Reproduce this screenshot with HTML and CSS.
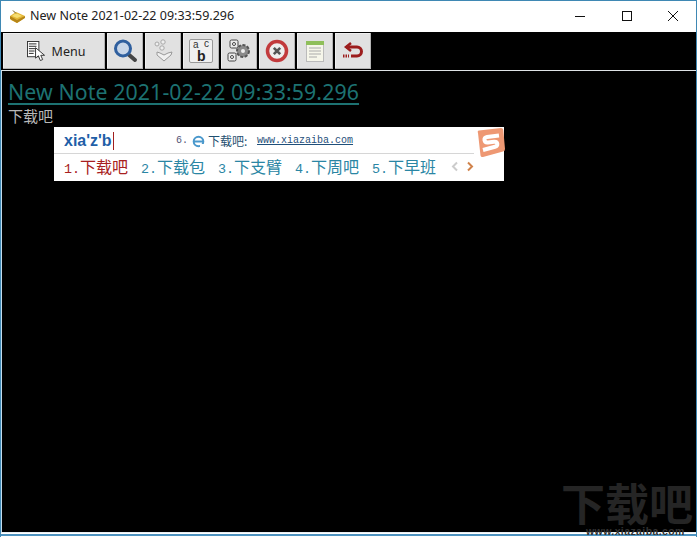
FILE: index.html
```html
<!DOCTYPE html>
<html lang="zh">
<head>
<meta charset="utf-8">
<title>New Note</title>
<link rel="stylesheet" href="styles.css">
</head>
<body>
<div class="window">
  <header class="titlebar">
    <svg class="app-icon" width="17" height="14" viewBox="0 0 17 14"><path d="M1 6 7 2l9 4-2 3-6 4-6-3z" fill="#e3b636"/><path d="M1 6l7 4 8-4v2l-8 5-7-4z" fill="#b58518"/><path d="M3 6 7 3l6 3-5 2z" fill="#f6dd70"/><path d="M4 0.500l3 3" stroke="#6a5010"/></svg>
    <span class="title">New Note 2021-02-22 09:33:59.296</span>
    <div class="caption">
      <svg width="46" height="31" viewBox="0 0 46 31"><path d="M17 15.500h10" stroke="#111"/></svg>
      <svg width="46" height="31" viewBox="0 0 46 31"><rect x="18.500" y="10.500" width="9" height="9" fill="none" stroke="#111"/></svg>
      <svg width="46" height="31" viewBox="0 0 46 31"><path d="M18 10l10 10M28 10 18 20" stroke="#111"/></svg>
    </div>
  </header>
  <nav class="toolbar">
    <button class="tool menu">
      <svg width="20" height="22" viewBox="0 0 20 22"><rect x="0.500" y="0.500" width="12" height="16" fill="#fff" stroke="#333"/><path d="M2 3h8M2 5.500h8M2 8h8M2 10.500h6M2 13h5" stroke="#222"/><path d="M9 7v11l3-2.500 2 5 2.500-1-2-4.500h4z" fill="#fff" stroke="#333"/></svg>
      <span>Menu</span>
    </button>
    <button class="tool">
      <svg width="26" height="26" viewBox="0 0 26 26"><path d="M16 16l7 6" stroke="#444" stroke-width="4" stroke-linecap="round"/><circle cx="11" cy="10.500" r="7.500" fill="#c8d6e8" stroke="#2f5f9e" stroke-width="3"/></svg>
    </button>
    <button class="tool">
      <svg width="24" height="26" viewBox="0 0 24 26"><g fill="#eee" stroke="#a8a8a8"><circle cx="6" cy="6" r="2"/><circle cx="12" cy="4" r="2.200"/><circle cx="11" cy="10" r="2.200"/></g><path d="M6 14l3 1 4 2 4-2 4-1-1 3-7 6-7-6z" fill="#f0f0f0" stroke="#999"/></svg>
    </button>
    <button class="tool">
      <span class="ab"><span class="ab-a">a</span><span class="ab-c">c</span><b class="ab-b">b</b></span>
    </button>
    <button class="tool">
      <svg width="28" height="26" viewBox="0 0 28 26"><g fill="#ececec" stroke="#444"><rect x="5" y="2" width="8" height="8" rx="1.500"/><rect x="3" y="15" width="8" height="8" rx="1.500"/></g><circle cx="9" cy="6" r="1.500" fill="#fff" stroke="#444"/><circle cx="7" cy="19" r="1.500" fill="#fff" stroke="#444"/><circle cx="18" cy="13" r="6" fill="#8a8a8a" stroke="#555" stroke-width="2" stroke-dasharray="3 1.500"/><circle cx="18" cy="13" r="2" fill="#eee"/></svg>
    </button>
    <button class="tool">
      <svg width="26" height="26" viewBox="0 0 26 26"><circle cx="13" cy="13" r="9.500" fill="#eee" stroke="#c23a3c" stroke-width="3.500"/><path d="M9.800 9.800l6.400 6.400M16.200 9.800l-6.400 6.400" stroke="#555" stroke-width="2.600"/></svg>
    </button>
    <button class="tool">
      <svg width="24" height="26" viewBox="0 0 24 26"><rect x="3.500" y="3.500" width="17" height="20" fill="#f6f6ea" stroke="#bbb"/><rect x="3" y="3" width="18" height="4" fill="#8fbf5a"/><path d="M6 10h12M6 13h12M6 16h12M6 19h8" stroke="#aaa"/></svg>
    </button>
    <button class="tool">
      <svg width="24" height="26" viewBox="0 0 24 26"><path d="M10 5 5 9l5 4" fill="none" stroke="#9c1c1c" stroke-width="2.500"/><path d="M5 9h11a4.500 4.500 0 0 1 0 9H10" fill="none" stroke="#9c1c1c" stroke-width="3"/><path d="M2 18h6" stroke="#9c1c1c" stroke-width="3" stroke-dasharray="1.500 1"/></svg>
    </button>
  </nav>
  <main class="editor">
    <h1 class="heading">New Note 2021-02-22 09:33:59.296</h1>
    <p class="body-text">下载吧</p>
  </main>
  <div class="frame-bottom"></div>
  <section class="ime">
    <div class="ime-top">
      <span class="pinyin">xia'z'b</span>
      <span class="hint"><span class="hint-n">6.</span>
        <svg class="e-icon" width="13" height="13" viewBox="0 0 13 13"><circle cx="6.500" cy="6.500" r="4.800" fill="none" stroke="#4a98cc" stroke-width="2"/><path d="M2 6.500h9" stroke="#4a98cc" stroke-width="2"/><path d="M8 9h4v3H8z" fill="#fff"/></svg>
        <span class="hint-t">下载吧:</span><span class="hint-url">www.xiazaiba.com</span></span>
      <svg class="sogou" width="32" height="32" viewBox="0 0 32 32"><path d="M4 6Q3 4 5 3.500L27 1q2 0 2.300 2L31 22q0 2-2 2.500L9 30q-2 .5-2.500-1.500z" fill="#ee9873"/><path d="M25 8.500 13 10q-3 .5-2.500 3.200t3.500 2.300l6-.8q3-.3 3.300 2t-2.300 3L9 23" fill="none" stroke="#fff" stroke-width="4"/></svg>
    </div>
    <div class="ime-list">
      <span class="cand active"><span class="num">1.</span>下载吧</span>
      <span class="cand"><span class="num">2.</span>下载包</span>
      <span class="cand"><span class="num">3.</span>下支臂</span>
      <span class="cand"><span class="num">4.</span>下周吧</span>
      <span class="cand"><span class="num">5.</span>下早班</span>
      <span class="arrows">
        <svg width="8" height="11" viewBox="0 0 8 11"><path d="M6 1.500 2 5.500l4 4" fill="none" stroke="#ccc" stroke-width="2"/></svg>
        <svg width="8" height="11" viewBox="0 0 8 11"><path d="M2 1.500l4 4-4 4" fill="none" stroke="#d0824a" stroke-width="2"/></svg>
      </span>
    </div>
  </section>
  <div class="watermark"><span class="wm-big">下载吧</span><span class="wm-url">www.xiazaiba.com</span></div>
</div>
</body>
</html>
```
FILE: styles.css
```css
* { box-sizing: border-box; }
html, body { margin: 0; padding: 0; }
body { width: 697px; height: 537px; overflow: hidden; background: #000; font-family: "Liberation Sans", "Noto Sans CJK SC", sans-serif; }
.window { position: relative; width: 697px; height: 537px; display: flex; flex-direction: column; border: 1px solid #3f88b4; border-bottom: 0; overflow: hidden; background: #000; }
.titlebar { height: 31px; flex: none; background: #fff; display: flex; align-items: center; padding-left: 8px; }
.app-icon { flex: none; }
.title { margin-left: 4px; font: 12.500px/1 "Noto Sans", "Liberation Sans", sans-serif; color: #222; white-space: nowrap; }
.caption { margin-left: auto; display: flex; height: 31px; }
.caption svg { display: block; }
.toolbar { height: 38px; flex: none; background: #000; display: flex; gap: 2px; padding: 1px 0 1px 2px; }
.tool { width: 36px; height: 36px; padding: 0; border: 0; background: #e1e1e1; box-shadow: inset -1px -1px 0 #b4b4b4, inset 1px 1px 0 #efefef; display: flex; align-items: center; justify-content: center; }
.menu { width: 102px; gap: 6px; padding-left: 4px; font: 12.500px "Noto Sans", "Liberation Sans", sans-serif; color: #222; }
.menu svg { width: 19px; height: 21px; }
.ab { position: relative; display: block; width: 24px; height: 24px; background: #f0f0f0; border: 1px solid #999; border-radius: 2px; font-family: "Liberation Sans", sans-serif; color: #333; }
.ab-a, .ab-c, .ab-b { position: absolute; line-height: 1; }
.ab-a { left: 3px; top: 0; font-size: 10px; }
.ab-c { right: 3px; top: -1px; font-size: 10px; }
.ab-b { left: 7px; top: 9px; font-size: 14px; color: #222; }
.editor { flex: 1; background: #000; border-top: 1px solid #dfe3e6; border-left: 1px solid #c4dcec; padding: 8px 0 0 6px; }
.heading { margin: 0; font: 400 21.300px/26px "Noto Sans", "Liberation Sans", sans-serif; letter-spacing: 0.100px; color: #1d7272; text-decoration: underline; text-underline-offset: 3px; white-space: nowrap; }
.body-text { margin: 1px 0 0; font: 15px/19px "Noto Sans CJK SC", sans-serif; color: #b8b8b8; }
.frame-bottom { flex: none; height: 5px; background: #fff; border-top: 1px solid #e8eef2; box-shadow: inset 0 1px 0 #fff, inset 0 3px 0 #4d93c0; }
.ime { position: absolute; left: 53px; top: 126px; width: 450px; height: 54px; background: #fff; display: flex; flex-direction: column; }
.ime-top { position: relative; height: 27px; flex: none; margin-right: 30px; padding-top: 2px; border-bottom: 1px solid #d6d6d6; display: flex; align-items: center; padding-left: 10px; }
.pinyin { width: 112px; font: 700 16px/20px "Liberation Sans", sans-serif; color: #1f5fa8; }
.pinyin::after { content: ""; display: inline-block; width: 1px; height: 18px; margin-left: 1px; vertical-align: -4px; background: #a02020; }
.hint { display: flex; align-items: center; gap: 4px; font: 10px/14px "Liberation Mono", "Noto Sans CJK SC", monospace; color: #1f4f7a; }
.hint-n { color: #557; }
.hint-t { width: 49px; font: 12px/14px "Noto Sans CJK SC", sans-serif; margin-left: -1px; color: #1f4f70; white-space: nowrap; }
.hint-url { margin-left: -4px; font-family: "Liberation Mono", monospace; font-size: 10px; text-decoration: underline; }
.e-icon { flex: none; }
.sogou { position: absolute; right: -32px; top: 0; }
.ime-list { flex: 1; display: flex; align-items: center; padding: 0 0 3px 10px; gap: 13px; font: 16px/24px "Noto Sans CJK SC", sans-serif; color: #2a86a4; }
.cand { white-space: nowrap; width: 64px; }
.num { font: 13.400px "Liberation Mono", monospace; }
.active { color: #a82020; }
.arrows { margin-left: 2px; display: flex; gap: 7px; align-items: center; }
.arrows svg { display: block; }
.watermark { position: absolute; right: 0; bottom: 0; width: 136px; height: 59px; }
.wm-big { position: absolute; left: 1px; top: 2px; font: 700 44px/44px "Noto Sans CJK SC", sans-serif; color: #252525; white-space: nowrap; }
.wm-url { position: absolute; left: 26px; bottom: 1px; font: 700 10.500px/10px "Liberation Sans", sans-serif; color: #333; letter-spacing: 0.4px; white-space: nowrap; }
```
